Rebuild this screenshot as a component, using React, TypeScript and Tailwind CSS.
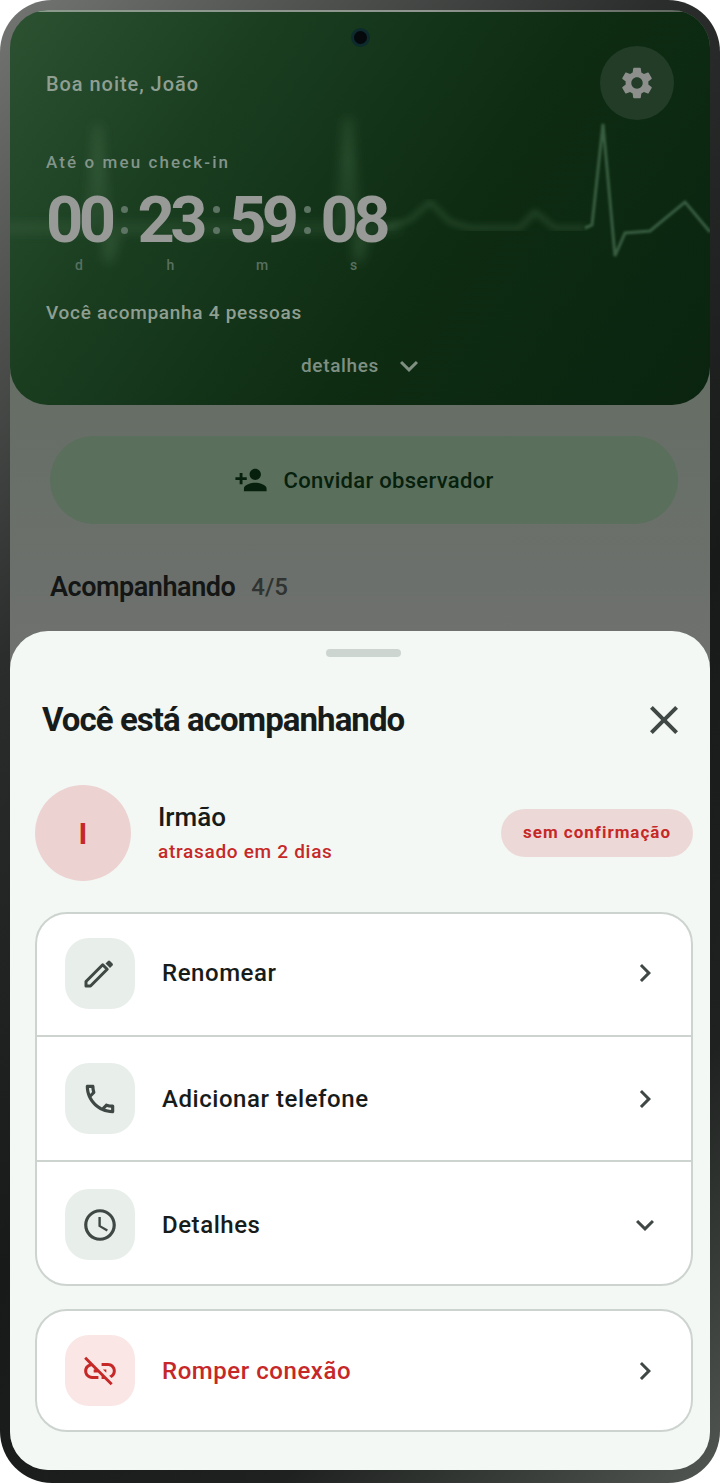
import React from "react";
import { MdSettings, MdPersonAddAlt1, MdClose, MdChevronRight, MdExpandMore, MdOutlinePhone, MdOutlineAccessTime, MdLinkOff } from "react-icons/md";

function Ecg() {
  return (
    <svg className="absolute left-[-10px] top-[90px] pointer-events-none" width="720" height="180" viewBox="0 100 720 180" fill="none">
      <defs>
        <filter id="b1" x="-10%" y="-10%" width="120%" height="120%"><feGaussianBlur stdDeviation="6" /></filter>
        <filter id="b2" x="-10%" y="-10%" width="120%" height="120%"><feGaussianBlur stdDeviation="3" /></filter>
        <filter id="b3" x="-10%" y="-10%" width="120%" height="120%"><feGaussianBlur stdDeviation="1.2" /></filter>
      </defs>
      <polyline filter="url(#b1)" stroke="#4f7a55" strokeOpacity="0.4" strokeWidth="6" points="0,228 80,228 90,228 98,125 108,262 118,228 200,228 330,228 340,228 348,118 358,262 368,228 400,228" />
      <polyline filter="url(#b2)" stroke="#4f7a55" strokeOpacity="0.4" strokeWidth="4" points="385,228 410,220 430,202 450,222 470,228 520,228 535,212 555,228 585,228" />
      <polyline filter="url(#b3)" stroke="#4f7a5a" strokeOpacity="0.65" strokeWidth="3" points="585,228 592,225 603,124 615,256 625,233 650,231 685,202 710,232" />
    </svg>
  );
}

function PencilIcon() {
  return (
    <svg width="36" height="36" viewBox="0 0 36 36" fill="none">
      <path d="M4 31 L4 26.5 L20.7 9.8 L25.2 14.3 L8.5 31 Z" stroke="currentColor" strokeWidth="3" strokeLinejoin="round" />
      <path d="M23.5 8.5 L26 6 Q27 5 28 6 L30.5 8.5 Q31.5 9.5 30.5 10.5 L28 13 Z" fill="currentColor" />
    </svg>
  );
}

function Row({ icon, label, tile = "bg-[#e8eee9] text-[#3f4844]", text = "text-[#171c1a]", trailing, h = "h-[122px]" }: { icon: React.ReactNode; label: string; tile?: string; text?: string; trailing: React.ReactNode; h?: string }) {
  return (
    <div className={`flex items-center pl-[28px] pr-[28px] ${h}`}>
      <div className={`flex h-[71px] w-[70px] items-center justify-center rounded-[24px] ${tile}`}>{icon}</div>
      <span className={`ml-[27px] flex-1 text-[24px] font-medium tracking-[0.55px] ${text}`}>{label}</span>
      <span className="text-[#3f4844]">{trailing}</span>
    </div>
  );
}

export default function App() {
  return (
    <div className="h-[1483px] w-[720px] bg-white" style={{ fontFamily: "Roboto, sans-serif" }}>
      <div className="h-full rounded-[52px] bg-[linear-gradient(135deg,#747674_0%,#555755_12%,#2a2d2b_30%,#171a18_58%,#1e211f_80%,#525753_100%)] pb-[13px] pl-[10px] pr-[10px] pt-[10px]">
        <div className="relative flex h-full flex-col overflow-hidden rounded-[38px] bg-[linear-gradient(180deg,#666e66_27%,#6f716f_45%,#707270_100%)]">
          <div className="relative h-[395px] shrink-0 overflow-hidden rounded-b-[38px] bg-[linear-gradient(125deg,#2c5232_0%,#1a3d20_28%,#0e2c12_60%,#0a2410_100%)] pl-[36px] text-[#8f9f92]">
            <div className="absolute left-0 right-0 top-0 h-[2px] bg-[linear-gradient(90deg,#8a9a8c,#8f958f_60%,#5a625a)]" />
            <Ecg />
            <div className="relative flex h-full flex-col">
              <div className="mt-[60px] text-[20px] font-medium leading-[28px] tracking-[0.95px]">Boa noite, João</div>
              <div className="mt-[52px] text-[17px] font-medium leading-[24px] tracking-[2.1px] text-[#83958a]">Até o meu check-in</div>
              <div className="mt-[11px] flex items-center text-[#989a98]">
                {[["00", "d"], ["23", "h"], ["59", "m"], ["08", "s"]].map(([n, u], i) => (
                  <React.Fragment key={u}>
                    {i > 0 && (
                      <div className="flex h-[60px] w-[25.5px] flex-col items-center justify-center gap-[14.5px]">
                        <span className="h-[7px] w-[7px] rounded-full bg-[#5d7363]" />
                        <span className="h-[7px] w-[7px] rounded-full bg-[#5d7363]" />
                      </div>
                    )}
                    <div className="relative w-[66px] pr-[4px] text-center text-[65px] font-bold leading-[70px] tracking-[-4.5px]">
                      {n}
                      <span className="absolute left-0 right-0 top-[70px] text-center text-[14px] font-medium leading-[20px] tracking-normal text-[#577060]">{u}</span>
                    </div>
                  </React.Fragment>
                ))}
              </div>
              <div className="mt-[44px] text-[19px] font-medium leading-[28px] tracking-[0.72px]">Você acompanha 4 pessoas</div>
              <div className="mt-[21px] flex items-center justify-center gap-[20px] pr-[36px] text-[#7f9083]">
                <span className="text-[19px] font-medium leading-[28px] tracking-[0.65px]">detalhes</span>
                <MdExpandMore size={36} className="-mx-[8px]" />
              </div>
            </div>
            <div className="absolute right-[36px] top-[36px] flex h-[74px] w-[74px] items-center justify-center rounded-full bg-[#223c27] text-[#8c8f8c]">
              <MdSettings size={38} />
            </div>
          </div>
          <div className="ml-[40px] mr-[32px] mt-[31px] flex h-[88px] shrink-0 items-center justify-center gap-[15px] rounded-[44px] bg-[#5a6f5c] text-[#06200d]">
            <MdPersonAddAlt1 size={34} className="-scale-x-100" />
            <span className="text-[22px] font-medium tracking-[0.3px]">Convidar observador</span>
          </div>
          <div className="mx-[40px] mt-[43px] flex items-center gap-[16px] leading-[40px]">
            <span className="text-[27px] font-semibold tracking-[-0.45px] text-[#141615]">Acompanhando</span>
            <span className="text-[24px] font-medium text-[#2f3331]">4/5</span>
          </div>
          <div className="absolute bottom-0 left-0 right-0 h-[839px] rounded-t-[38px] bg-[#f3f8f4]">
            <div className="ml-[316px] mt-[18px] h-[8px] w-[75px] rounded-full bg-[#cdd5d0]" />
            <div className="ml-[32px] mr-[32px] mt-[39px] flex items-center justify-between">
              <span className="text-[33px] font-bold leading-[44px] tracking-[-0.95px] text-[#171c1a]">Você está acompanhando</span>
              <MdClose size={48} className="-mr-[10px] text-[#3f4844]" />
            </div>
            <div className="ml-[25px] mr-[17px] mt-[41px] flex items-center">
              <div className="flex h-[96px] w-[96px] items-center justify-center rounded-full bg-[#ecd3d2] text-[30px] font-bold text-[#c62828]">I</div>
              <div className="ml-[27px] mb-[2px] flex-1">
                <div className="text-[26px] font-medium leading-[34px] text-[#171c1a]">Irmão</div>
                <div className="mt-[5px] text-[19px] font-medium leading-[26px] tracking-[0.7px] text-[#c62828]">atrasado em 2 dias</div>
              </div>
              <div className="flex h-[48px] w-[192px] items-center justify-center rounded-full bg-[#ecd9d7] text-[17px] font-bold tracking-[1px] text-[#c62828]">sem confirmação</div>
            </div>
            <div className="ml-[25px] mr-[17px] mt-[31px] rounded-[32px] border-2 border-[#cdd3cf] bg-white">
              <Row icon={<PencilIcon />} label="Renomear" h="h-[121px] pb-[3px]" trailing={<MdChevronRight size={36} />} />
              <div className="h-[2px] bg-[#cdd3cf]" />
              <Row icon={<MdOutlinePhone size={38} />} label="Adicionar telefone" h="h-[123px]" trailing={<MdChevronRight size={36} />} />
              <div className="h-[2px] bg-[#cdd3cf]" />
              <Row icon={<MdOutlineAccessTime size={38} />} label="Detalhes" h="h-[122px] pt-[3px]" trailing={<MdExpandMore size={36} />} />
            </div>
            <div className="ml-[25px] mr-[17px] mt-[23px] rounded-[32px] border-2 border-[#cdd3cf] bg-white">
              <Row icon={<MdLinkOff size={38} />} label="Romper conexão" h="h-[119px]" tile="bg-[#f9e6e5] text-[#c62828]" text="text-[#c62828]" trailing={<MdChevronRight size={36} />} />
            </div>
          </div>
          <div className="absolute left-[341px] top-[18px] h-[19px] w-[19px] rounded-full border-[3px] border-[#0d2b2c] bg-[#05090c]" />
        </div>
      </div>
    </div>
  );
}
